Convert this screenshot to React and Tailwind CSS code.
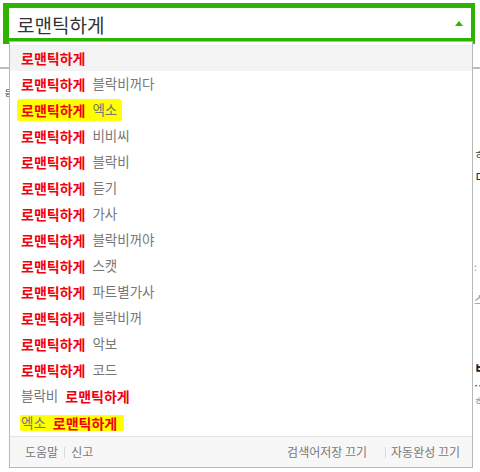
import React from "react";

const rows = [
  { pre: "", red: "로맨틱하게", post: "", active: true },
  { pre: "", red: "로맨틱하게", post: "블락비꺼다" },
  { pre: "", red: "로맨틱하게", post: "엑소", hl: 1 },
  { pre: "", red: "로맨틱하게", post: "비비씨" },
  { pre: "", red: "로맨틱하게", post: "블락비" },
  { pre: "", red: "로맨틱하게", post: "듣기" },
  { pre: "", red: "로맨틱하게", post: "가사" },
  { pre: "", red: "로맨틱하게", post: "블락비꺼야" },
  { pre: "", red: "로맨틱하게", post: "스캣" },
  { pre: "", red: "로맨틱하게", post: "파트별가사" },
  { pre: "", red: "로맨틱하게", post: "블락비꺼" },
  { pre: "", red: "로맨틱하게", post: "악보" },
  { pre: "", red: "로맨틱하게", post: "코드" },
  { pre: "블락비", red: "로맨틱하게", post: "" },
  { pre: "엑소", red: "로맨틱하게", post: "", hl: 2 },
];

function Row({ r }) {
  let hl = "";
  if (r.hl === 1)
    hl = "bg-[#ffff00] rounded-[3px] pl-[4px] pr-[5px] -ml-[4px] py-[4px] -my-[4px]";
  if (r.hl === 2)
    hl = "bg-[#ffff00] rounded-[2px] pl-[1px] pr-[7px] -ml-[1px] py-[1px] mt-[1px]";
  return (
    <div
      className={
        "h-[26px] flex items-center pl-[11px] leading-none " +
        (r.active ? "bg-[#f3f3f3]" : "")
      }
    >
      <span className={"inline-flex items-center gap-[7px] " + hl}>
        {r.pre && <span className="text-[13.5px] text-[#777]">{r.pre}</span>}
        <span className="text-[14px] font-bold text-[#f2000f]">{r.red}</span>
        {r.post && <span className="text-[13.5px] text-[#777]">{r.post}</span>}
      </span>
    </div>
  );
}

export default function App() {
  return (
    <div
      className="w-[480px] h-[472px] bg-white relative overflow-hidden"
      style={{ fontFamily: '"Noto Sans CJK KR", "Noto Sans", sans-serif' }}
    >
      {/* search box */}
      <div className="ml-[3px] mt-[3px] w-[472px] h-[41px] border-[#2db400] border-t-[5px] border-l-[6px] border-r-[4px] border-b-[6px] bg-white flex items-center justify-between pl-[8px] pr-[8px]">
        <span className="text-[19px] leading-none text-[#333] pt-[2px]">로맨틱하게</span>
        <span className="w-0 h-0 border-l-[4px] border-r-[4px] border-b-[5px] border-l-transparent border-r-transparent border-b-[#2db400] mt-[1px]" />
      </div>

      {/* page behind */}
      <div className="h-[2px] mt-[23px] bg-[#bdbdbd]" />
      <div className="flex justify-between">
        <div className="w-[9px] pl-[4px] pt-[20px] text-[8px] leading-none text-[#333] overflow-hidden">
          <div className="[writing-mode:vertical-rl]">등</div>
        </div>
        <div className="w-[6px] overflow-hidden text-[12px] leading-none text-[#444] whitespace-nowrap">
          <div className="mt-[80px] text-[11px]">ㅎ·</div>
          <div className="mt-[8px] text-[14px] text-[#333]">ㄷ</div>
          <div className="mt-[80px] text-[10px] text-[#888]">:</div>
          <div className="mt-[22px] text-[12px] text-[#999]">스</div>
          <div className="mt-[54px] text-[14px] text-[#222] font-bold">ㅂ</div>
          <div className="mt-[6px] text-[12px] text-[#333]">…</div>
          <div className="mt-[4px] text-[10px] text-[#999]">ㅎ</div>
        </div>
      </div>

      {/* dropdown */}
      <div className="absolute left-[9px] top-[41px] w-[464px] h-[427px] border border-[#b8b8b8] bg-white flex flex-col">
        <div className="pt-[3px] pb-[1px]">
          {rows.map((r, i) => (
            <Row key={i} r={r} />
          ))}
        </div>
        <div className="flex-1 border-t border-[#e4e4e4] bg-[#f7f7f7] flex items-center justify-between pl-[15px] pr-[12px] text-[12px] leading-none text-[#777]">
          <div className="flex items-center">
            <span>도움말</span>
            <span className="mx-[6px] w-px h-[11px] bg-[#d8d8d8]" />
            <span>신고</span>
          </div>
          <div className="flex items-center">
            <span>검색어저장 끄기</span>
            <span className="ml-[18px] mr-[5px] w-px h-[11px] bg-[#d8d8d8]" />
            <span>자동완성 끄기</span>
          </div>
        </div>
      </div>
    </div>
  );
}
